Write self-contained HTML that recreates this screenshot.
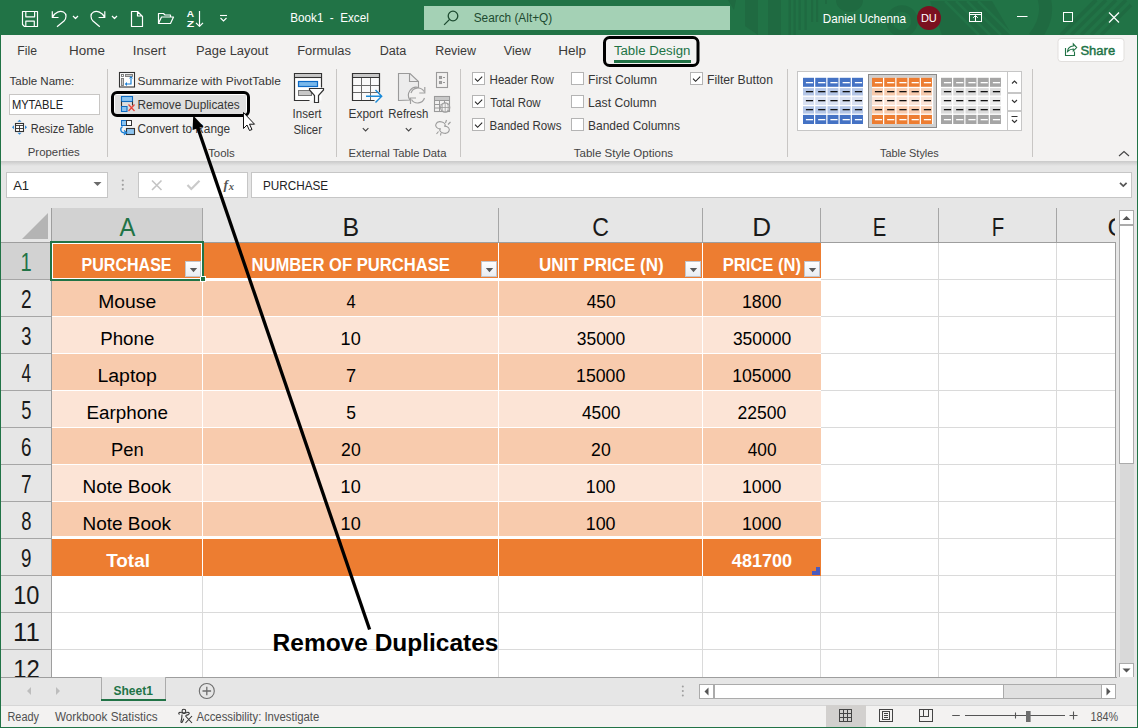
<!DOCTYPE html><html><head><meta charset="utf-8"><style>
*{margin:0;padding:0}html,body{width:1138px;height:728px;overflow:hidden;background:#f3f2f1}
svg{position:absolute;left:0;top:0;display:block}
text{font-family:"Liberation Sans",sans-serif;white-space:pre}
</style></head><body>
<svg width="1138" height="728" viewBox="0 0 1138 728">
<rect x="0" y="0" width="1138" height="35" fill="#217346" />
<g fill="#1f6a41"><polygon points="728,0 736,0 734,10"/><polygon points="745,0 758,0 758,35 745,26"/><rect x="768" y="0" width="13" height="35"/><rect x="788.5" y="0" width="2.5" height="35"/><rect x="793.5" y="0" width="2.2" height="35"/><rect x="798.5" y="0" width="2.2" height="30"/><rect x="804.5" y="0" width="2.2" height="30"/><rect x="811" y="0" width="2.2" height="22"/><rect x="816" y="0" width="2.2" height="22"/><rect x="825" y="0" width="2" height="4"/><path d="M836,0 A13.5,12 0 0 0 863,0 Z"/></g>
<circle cx="902" cy="21" r="12.5" fill="none" stroke="#1f6a41" stroke-width="6.5"/>
<polygon points="930,1 992,1 1012,35 942,35" fill="#1f6a41"/>
<g stroke="#217346" stroke-width="2.6"><path d="M945,1 L979,35 M956,1 L990,35 M967,1 L1001,35 M978,1 L1012,35"/></g>
<path d="M1044,-2 C1048,12 1044,26 1034,38" fill="none" stroke="#1f6a41" stroke-width="13"/>
<g stroke="#1f6a41" stroke-width="3.5"><path d="M1061,35 L1096,0"/><path d="M1061,35 L1096,0 M1071,35 L1106,0 M1081,35 L1116,0 M1091,35 L1126,0 M1101,35 L1131,5"/></g>
<g fill="none" stroke="#fff" stroke-width="1.2" stroke-linejoin="round">
<path d="M22.5,11.5 h15 v15 h-13 l-2,-2 z M25.8,11.5 v5.3 h8.8 v-5.3 M25.8,26.5 v-5.3 h8.5 v5.3"/>
<path d="M52.3,11.2 v6.3 h6.2 M52.6,17.2 C55,12 60,10.5 63.5,12 C67,14 66.5,18.5 64,21 L57,26.8"/>
<path d="M73,16 l2.5,2.5 l2.5,-2.5"/>
<path d="M104.8,11.2 v6.3 h-6.2 M104.5,17.2 C102,12 97,10.5 93.5,12 C90,14 90.5,18.5 93,21 L99.8,26.8"/>
<path d="M112,16 l2.5,2.5 l2.5,-2.5"/>
<path d="M131.5,11.5 h6 l5,5 v10 h-11 z M137.5,11.5 v4.5 h5"/>
<path d="M158.5,23.5 v-10 h5 l1.5,1.5 h5.5 v2.5 M158.5,23.5 l3,-6.5 h12 l-3,6.5 z"/>
<path d="M199.5,11 v15 M196,22.8 l3.5,3.5 l3.5,-3.5"/>
</g>
<text x="186.76" y="17.4" font-size="8.43" fill="#fff" font-weight="bold" textLength="7.31" lengthAdjust="spacingAndGlyphs" >A</text>
<text x="186.66" y="26.9" font-size="8.43" fill="#fff" font-weight="bold" textLength="7.47" lengthAdjust="spacingAndGlyphs" >Z</text>
<g fill="none" stroke="#fff" stroke-width="1.1"><path d="M220,15.5 h7"/><path d="M220.5,18 l3,3 l3,-3"/></g>
<text x="290.34" y="22" font-size="13.08" fill="#fff" textLength="78.42" lengthAdjust="spacingAndGlyphs" >Book1  -  Excel</text>
<rect x="424" y="6" width="306" height="24" fill="#a4d1b5" />
<g fill="none" stroke="#1d4b30" stroke-width="1.3"><circle cx="453" cy="16" r="4.8"/><path d="M449.6,19.4 l-5.5,5.5"/></g>
<text x="473.68" y="22" font-size="13.08" fill="#1d4b30" textLength="78.54" lengthAdjust="spacingAndGlyphs" >Search (Alt+Q)</text>
<text x="822.84" y="22.8" font-size="12.79" fill="#fff" textLength="83.13" lengthAdjust="spacingAndGlyphs" >Daniel Uchenna</text>
<circle cx="929" cy="18" r="12" fill="#7b1020"/>
<text x="920.89" y="21.6" font-size="11.05" fill="#fff" textLength="15.95" lengthAdjust="spacingAndGlyphs" >DU</text>
<g fill="none" stroke="#fff" stroke-width="1"><rect x="969.5" y="12.5" width="12" height="9"/><path d="M969.5,14.5 h12 M975.5,21 v-5.5 M973.2,17.8 l2.3,-2.3 l2.3,2.3"/><path d="M1017,16.5 h10.5"/><rect x="1063.5" y="12.5" width="9" height="9"/></g>
<g fill="none" stroke="#fff" stroke-width="1.2"><path d="M1109,12.5 l10,10 M1119,12.5 l-10,10"/></g>
<rect x="0" y="35" width="1138" height="126" fill="#f3f2f1" />
<text x="17.30" y="55" font-size="13.08" fill="#3b3a39" textLength="19.63" lengthAdjust="spacingAndGlyphs" >File</text>
<text x="69.10" y="55" font-size="13.08" fill="#3b3a39" textLength="35.89" lengthAdjust="spacingAndGlyphs" >Home</text>
<text x="132.78" y="55" font-size="13.08" fill="#3b3a39" textLength="33.08" lengthAdjust="spacingAndGlyphs" >Insert</text>
<text x="195.94" y="55" font-size="13.08" fill="#3b3a39" textLength="72.43" lengthAdjust="spacingAndGlyphs" >Page Layout</text>
<text x="297.24" y="55" font-size="13.08" fill="#3b3a39" textLength="53.71" lengthAdjust="spacingAndGlyphs" >Formulas</text>
<text x="379.66" y="55" font-size="13.08" fill="#3b3a39" textLength="26.72" lengthAdjust="spacingAndGlyphs" >Data</text>
<text x="435.18" y="55" font-size="13.08" fill="#3b3a39" textLength="40.78" lengthAdjust="spacingAndGlyphs" >Review</text>
<text x="503.65" y="55" font-size="13.08" fill="#3b3a39" textLength="27.29" lengthAdjust="spacingAndGlyphs" >View</text>
<text x="558.18" y="55" font-size="13.08" fill="#3b3a39" textLength="27.97" lengthAdjust="spacingAndGlyphs" >Help</text>
<text x="613.91" y="55" font-size="13.08" fill="#217346" textLength="76.43" lengthAdjust="spacingAndGlyphs" >Table Design</text>
<rect x="614" y="60" width="77" height="3" fill="#217346" />
<rect x="604.5" y="37.5" width="93.5" height="28" rx="5" fill="none" stroke="#000" stroke-width="3"/>
<rect x="1058" y="38.5" width="66" height="23" rx="3" fill="#fff" stroke="#e1dfdd" stroke-width="1"/>
<g fill="none" stroke="#217346" stroke-width="1.1"><path d="M1065.5,48 v7.5 h9 v-4"/><path d="M1067.5,51.5 c0.3,-3.2 2.5,-5.2 5.8,-5.5 v-2 l3.4,3.6 l-3.4,3.4 v-2 c-2.2,0 -4,0.8 -5.8,2.5 z"/></g>
<text x="1080.43" y="54.9" font-size="13.08" fill="#217346" textLength="34.75" lengthAdjust="spacingAndGlyphs" stroke="#217346" stroke-width="0.45">Share</text>
<path d="M107.5,69 V157" stroke="#c8c6c4" stroke-width="1"/>
<path d="M336.5,69 V157" stroke="#c8c6c4" stroke-width="1"/>
<path d="M460.5,69 V157" stroke="#c8c6c4" stroke-width="1"/>
<path d="M787.5,69 V157" stroke="#c8c6c4" stroke-width="1"/>
<path d="M1032.5,69 V157" stroke="#c8c6c4" stroke-width="1"/>
<text x="9.55" y="84.6" font-size="11.63" fill="#363636" textLength="64.79" lengthAdjust="spacingAndGlyphs" >Table Name:</text>
<rect x="9.5" y="94.5" width="90" height="20" fill="#fff" stroke="#c8c6c4"/>
<text x="11.88" y="108.7" font-size="11.92" fill="#222" textLength="51.28" lengthAdjust="spacingAndGlyphs" >MYTABLE</text>
<rect x="15.5" y="123.5" width="8" height="8" fill="#fff" stroke="#333" stroke-width="1.1"/>
<path d="M15.5,125.5 h8 M15.5,128.5 h8 M19.5,125.5 v6" fill="none" stroke="#333" stroke-width="0.9"/>
<g fill="#2b88d8"><path d="M12,127.3 l2,-2 v4z M27,127.3 l-2,-2 v4z M19.5,119.8 l-2,2 h4z M19.5,134.8 l-2,-2 h4z"/></g>
<text x="30.80" y="132.5" font-size="11.92" fill="#363636" textLength="62.70" lengthAdjust="spacingAndGlyphs" >Resize Table</text>
<text x="27.77" y="156.4" font-size="10.76" fill="#444" textLength="51.94" lengthAdjust="spacingAndGlyphs" >Properties</text>
<rect x="119.5" y="72.5" width="15" height="14.5" fill="#fff" stroke="#333" stroke-width="1.1"/>
<rect x="121.5" y="74.5" width="2" height="2" fill="#fff" stroke="#777" stroke-width="0.9"/>
<rect x="125.5" y="74.5" width="7" height="2" fill="#c8c8c8" stroke="#777" stroke-width="0.9"/>
<rect x="121.5" y="78.5" width="2" height="7" fill="#c8c8c8" stroke="#777" stroke-width="0.9"/>
<g fill="none" stroke="#1a7fd4" stroke-width="1.2"><path d="M131,79 v5 h-4.5"/></g>
<path d="M129,78.5 l2,-2.5 l2,2.5z M127,82 l-2.3,2 l2.3,2z" fill="#1a7fd4"/>
<text x="137.47" y="84.8" font-size="11.63" fill="#363636" textLength="143.36" lengthAdjust="spacingAndGlyphs" >Summarize with PivotTable</text>
<rect x="114.5" y="94.5" width="132" height="20" fill="#dedede" stroke="#fff" stroke-width="1"/>
<rect x="121.5" y="96.5" width="11" height="5" fill="#8cc4f0" stroke="#0f6cc2" stroke-width="1.1"/>
<path d="M121.5,101.5 v4.5 M132.5,101.5 v4" stroke="#333" stroke-width="1.1" fill="none"/>
<path d="M121.5,106.5 h5.5 v5 h-5.5z" fill="#8cc4f0" stroke="#0f6cc2" stroke-width="1.1"/>
<path d="M128.5,104.5 l6,6.5 M134.5,104.5 l-6,6.5" stroke="#e8473e" stroke-width="1.3"/>
<text x="137.43" y="108.8" font-size="12.21" fill="#363636" textLength="102.20" lengthAdjust="spacingAndGlyphs" >Remove Duplicates</text>
<rect x="112.5" y="92.5" width="136" height="23" rx="4.5" fill="none" stroke="#000" stroke-width="3"/>
<rect x="121.5" y="120.5" width="5" height="5" fill="#8cc4f0" stroke="#0f6cc2" stroke-width="1"/>
<rect x="126.5" y="120.5" width="5" height="5" fill="#fff" stroke="#333" stroke-width="1"/>
<rect x="126.5" y="128.5" width="8" height="6" fill="#8cc4f0" stroke="#333" stroke-width="1.1"/>
<g fill="none" stroke="#1a7fd4" stroke-width="1.3"><path d="M122.5,126.5 c-3,2 -2,6 2,6.5 h2"/><path d="M124,130.5 l2.5,2 l-2.5,2.2"/></g>
<text x="137.41" y="132.6" font-size="11.92" fill="#363636" textLength="92.81" lengthAdjust="spacingAndGlyphs" >Convert to Range</text>
<text x="208.15" y="156.9" font-size="10.76" fill="#444" textLength="26.67" lengthAdjust="spacingAndGlyphs" >Tools</text>
<path d="M243.5,112.5 v16 l3.5,-3.5 l2.5,5.5 l2.5,-1 l-2.5,-5.3 h5 z" fill="#fff" stroke="#111" stroke-width="1"/>
<rect x="294.5" y="73.5" width="27" height="27" fill="#fff"/><path d="M309.5,100.5 h-15 v-27 h27 v14" fill="none" stroke="#333" stroke-width="1.2"/>
<rect x="295" y="74" width="26" height="3.5" fill="#c8c8c8" />
<path d="M294.5,77.5 h27" stroke="#333" stroke-width="1.1"/>
<rect x="298.5" y="81.5" width="19" height="5" fill="#7ab8ea" stroke="#0d6ac6" stroke-width="1.2"/>
<rect x="298.5" y="90.5" width="13" height="5" fill="#c8c8c8" stroke="#777" stroke-width="1"/>
<path d="M309.5,88.5 h14 v1.5 l-5,5.5 v7 h-4 v-7 l-5,-5.5 z" fill="#fff" stroke="#333" stroke-width="1.2"/>
<text x="292.54" y="118" font-size="11.92" fill="#363636" textLength="28.92" lengthAdjust="spacingAndGlyphs" >Insert</text>
<text x="293.50" y="133.7" font-size="11.92" fill="#363636" textLength="28.47" lengthAdjust="spacingAndGlyphs" >Slicer</text>
<rect x="352.5" y="73.5" width="27" height="27" fill="#fafafa"/>
<rect x="353" y="74" width="26" height="3.5" fill="#c8c8c8" />
<g fill="none" stroke="#6a6a6a" stroke-width="1"><path d="M361.5,77.5 v23 M370.5,77.5 v23 M352.5,85.5 h27 M352.5,92.5 h27"/></g>
<g fill="none" stroke="#333" stroke-width="1.2"><path d="M379.5,92 v-18.5 h-27 v27 h22 M352.5,77.5 h27"/></g>
<g fill="none" stroke="#1a8ad8" stroke-width="1.4"><path d="M366,96.2 h15.5 M375.5,90 l6.2,6.2 l-6.2,6.2"/></g>
<text x="348.52" y="118" font-size="12.50" fill="#363636" textLength="34.45" lengthAdjust="spacingAndGlyphs" >Export</text>
<path d="M362.8,128.2 l2.8,2.8 l2.8,-2.8" fill="none" stroke="#444" stroke-width="1.1"/>
<path d="M398.5,100.5 v-27 h11.5 l8.5,8 v6 a8,8 0 0 0 -8.5,12.5 z" fill="#ececec" stroke="#9a9a9a" stroke-width="1.1"/>
<path d="M409.5,73.5 v8 h9" fill="none" stroke="#9a9a9a" stroke-width="1.1"/>
<g fill="none" stroke="#a0a0a0" stroke-width="1.2"><path d="M411,93 a7.2,7.2 0 0 1 13,-1.5"/><path d="M424.5,98 a7.2,7.2 0 0 1 -13,1.5"/></g>
<path d="M424.8,87 v6 h-5.5 M410.5,104 v-6 h5.5" fill="none" stroke="#a0a0a0" stroke-width="1.2"/>
<text x="388.37" y="118" font-size="12.50" fill="#363636" textLength="39.86" lengthAdjust="spacingAndGlyphs" >Refresh</text>
<path d="M405.8,128.2 l2.8,2.8 l2.8,-2.8" fill="none" stroke="#444" stroke-width="1.1"/>
<g fill="none" stroke="#9a9a9a" stroke-width="1.1"><rect x="436.5" y="72.5" width="11" height="15"/><rect x="439.5" y="76.5" width="2" height="2"/><rect x="439.5" y="81.5" width="2" height="2"/><path d="M443,77.5 h2 M443,82.5 h2"/></g>
<rect x="434.5" y="96.5" width="15" height="15" fill="none" stroke="#9a9a9a" stroke-width="1.1"/>
<rect x="435" y="97" width="14" height="3" fill="#c8c8c8" />
<g fill="none" stroke="#9a9a9a" stroke-width="1"><path d="M434.5,100.5 h15 M439.5,100.5 v11 M444.5,100.5 v3 M434.5,104.5 h6 M434.5,108 h6"/></g>
<circle cx="445.2" cy="107.5" r="4.6" fill="#f3f2f1" stroke="#9a9a9a" stroke-width="1.1"/>
<path d="M440.6,107.5 h9.2 M445.2,102.9 v9.2 M443.2,103.5 c-1.5,2.5 -1.5,5.5 0,8 M447.2,103.5 c1.5,2.5 1.5,5.5 0,8" fill="none" stroke="#9a9a9a" stroke-width="0.8"/>
<g fill="none" stroke="#9a9a9a" stroke-width="1.1"><path d="M441,129 c-4.5,0 -6,-3 -5,-5 c1,-2.5 4,-2.5 6,-2 c2,0.5 4,2 3,4.5"/><path d="M444,126 c4.5,0 6,3 5,5 c-1,2.5 -4,2.5 -6,2 c-2,-0.5 -4,-2 -3,-4.5"/><path d="M445.5,123 l1,-3 M448,124.5 l2.5,-2.5 M438.5,131.5 l-2,2.5 M441,133 l-0.5,2.5"/></g>
<text x="348.58" y="156.8" font-size="10.76" fill="#444" textLength="97.91" lengthAdjust="spacingAndGlyphs" >External Table Data</text>
<rect x="472.5" y="72.5" width="12" height="12" fill="#fff" stroke="#b4b4b4" stroke-width="1"/>
<path d="M475.0,78.7 l2.6,2.6 l4.6,-4.6" fill="none" stroke="#222" stroke-width="1.1"/>
<text x="489.55" y="84.4" font-size="11.92" fill="#363636" textLength="64.40" lengthAdjust="spacingAndGlyphs" >Header Row</text>
<rect x="472.5" y="95.5" width="12" height="12" fill="#fff" stroke="#b4b4b4" stroke-width="1"/>
<path d="M475.0,101.7 l2.6,2.6 l4.6,-4.6" fill="none" stroke="#222" stroke-width="1.1"/>
<text x="490.25" y="107.4" font-size="11.92" fill="#363636" textLength="50.41" lengthAdjust="spacingAndGlyphs" >Total Row</text>
<rect x="472.5" y="118.5" width="12" height="12" fill="#fff" stroke="#b4b4b4" stroke-width="1"/>
<path d="M475.0,124.7 l2.6,2.6 l4.6,-4.6" fill="none" stroke="#222" stroke-width="1.1"/>
<text x="489.55" y="130.4" font-size="11.92" fill="#363636" textLength="71.86" lengthAdjust="spacingAndGlyphs" >Banded Rows</text>
<rect x="571.5" y="72.5" width="12" height="12" fill="#fff" stroke="#b4b4b4" stroke-width="1"/>
<text x="588.00" y="84.4" font-size="11.92" fill="#363636" textLength="69.07" lengthAdjust="spacingAndGlyphs" >First Column</text>
<rect x="571.5" y="95.5" width="12" height="12" fill="#fff" stroke="#b4b4b4" stroke-width="1"/>
<text x="588.00" y="107.4" font-size="11.92" fill="#363636" textLength="68.48" lengthAdjust="spacingAndGlyphs" >Last Column</text>
<rect x="571.5" y="118.5" width="12" height="12" fill="#fff" stroke="#b4b4b4" stroke-width="1"/>
<text x="588.02" y="130.4" font-size="11.92" fill="#363636" textLength="92.01" lengthAdjust="spacingAndGlyphs" >Banded Columns</text>
<rect x="690.5" y="72.5" width="12" height="12" fill="#fff" stroke="#b4b4b4" stroke-width="1"/>
<path d="M693.0,78.7 l2.6,2.6 l4.6,-4.6" fill="none" stroke="#222" stroke-width="1.1"/>
<text x="707.00" y="84.4" font-size="11.92" fill="#363636" textLength="65.98" lengthAdjust="spacingAndGlyphs" >Filter Button</text>
<text x="573.75" y="156.5" font-size="10.76" fill="#444" textLength="99.37" lengthAdjust="spacingAndGlyphs" >Table Style Options</text>
<rect x="797.5" y="71.5" width="210" height="59" fill="#fff" stroke="#c6c6c6"/>
<rect x="868.5" y="74.5" width="68" height="53" fill="#d0d0d0" stroke="#8a8a8a"/>
<rect x="803" y="77.8" width="61.2" height="46.2" fill="#fff" />
<rect x="803.00" y="77.80" width="11.0" height="9.0" fill="#4472c4" />
<rect x="805.90" y="82" width="7.2" height="1.3" fill="#fff"/>
<rect x="815.24" y="77.80" width="11.0" height="9.0" fill="#4472c4" />
<rect x="818.14" y="82" width="7.2" height="1.3" fill="#fff"/>
<rect x="827.48" y="77.80" width="11.0" height="9.0" fill="#4472c4" />
<rect x="830.38" y="82" width="7.2" height="1.3" fill="#fff"/>
<rect x="839.72" y="77.80" width="11.0" height="9.0" fill="#4472c4" />
<rect x="842.62" y="82" width="7.2" height="1.3" fill="#fff"/>
<rect x="851.96" y="77.80" width="11.0" height="9.0" fill="#4472c4" />
<rect x="854.86" y="82" width="7.2" height="1.3" fill="#fff"/>
<rect x="803.00" y="88.10" width="11.0" height="7.4" fill="#b4c6e7" />
<rect x="805.90" y="91" width="7.2" height="1.3" fill="#111"/>
<rect x="815.24" y="88.10" width="11.0" height="7.4" fill="#b4c6e7" />
<rect x="818.14" y="91" width="7.2" height="1.3" fill="#111"/>
<rect x="827.48" y="88.10" width="11.0" height="7.4" fill="#b4c6e7" />
<rect x="830.38" y="91" width="7.2" height="1.3" fill="#111"/>
<rect x="839.72" y="88.10" width="11.0" height="7.4" fill="#b4c6e7" />
<rect x="842.62" y="91" width="7.2" height="1.3" fill="#111"/>
<rect x="851.96" y="88.10" width="11.0" height="7.4" fill="#b4c6e7" />
<rect x="854.86" y="91" width="7.2" height="1.3" fill="#111"/>
<rect x="803.00" y="96.80" width="11.0" height="8.2" fill="#d9e1f2" />
<rect x="805.90" y="100" width="7.2" height="1.3" fill="#111"/>
<rect x="815.24" y="96.80" width="11.0" height="8.2" fill="#d9e1f2" />
<rect x="818.14" y="100" width="7.2" height="1.3" fill="#111"/>
<rect x="827.48" y="96.80" width="11.0" height="8.2" fill="#d9e1f2" />
<rect x="830.38" y="100" width="7.2" height="1.3" fill="#111"/>
<rect x="839.72" y="96.80" width="11.0" height="8.2" fill="#d9e1f2" />
<rect x="842.62" y="100" width="7.2" height="1.3" fill="#111"/>
<rect x="851.96" y="96.80" width="11.0" height="8.2" fill="#d9e1f2" />
<rect x="854.86" y="100" width="7.2" height="1.3" fill="#111"/>
<rect x="803.00" y="106.20" width="11.0" height="7.4" fill="#b4c6e7" />
<rect x="805.90" y="109" width="7.2" height="1.3" fill="#111"/>
<rect x="815.24" y="106.20" width="11.0" height="7.4" fill="#b4c6e7" />
<rect x="818.14" y="109" width="7.2" height="1.3" fill="#111"/>
<rect x="827.48" y="106.20" width="11.0" height="7.4" fill="#b4c6e7" />
<rect x="830.38" y="109" width="7.2" height="1.3" fill="#111"/>
<rect x="839.72" y="106.20" width="11.0" height="7.4" fill="#b4c6e7" />
<rect x="842.62" y="109" width="7.2" height="1.3" fill="#111"/>
<rect x="851.96" y="106.20" width="11.0" height="7.4" fill="#b4c6e7" />
<rect x="854.86" y="109" width="7.2" height="1.3" fill="#111"/>
<rect x="803.00" y="114.90" width="11.0" height="9.1" fill="#4472c4" />
<rect x="805.90" y="119" width="7.2" height="1.3" fill="#fff"/>
<rect x="815.24" y="114.90" width="11.0" height="9.1" fill="#4472c4" />
<rect x="818.14" y="119" width="7.2" height="1.3" fill="#fff"/>
<rect x="827.48" y="114.90" width="11.0" height="9.1" fill="#4472c4" />
<rect x="830.38" y="119" width="7.2" height="1.3" fill="#fff"/>
<rect x="839.72" y="114.90" width="11.0" height="9.1" fill="#4472c4" />
<rect x="842.62" y="119" width="7.2" height="1.3" fill="#fff"/>
<rect x="851.96" y="114.90" width="11.0" height="9.1" fill="#4472c4" />
<rect x="854.86" y="119" width="7.2" height="1.3" fill="#fff"/>
<rect x="872" y="77.8" width="61.2" height="46.2" fill="#fff" />
<rect x="872.00" y="77.80" width="11.0" height="9.0" fill="#ed7d31" />
<rect x="874.90" y="82" width="7.2" height="1.3" fill="#fff"/>
<rect x="884.24" y="77.80" width="11.0" height="9.0" fill="#ed7d31" />
<rect x="887.14" y="82" width="7.2" height="1.3" fill="#fff"/>
<rect x="896.48" y="77.80" width="11.0" height="9.0" fill="#ed7d31" />
<rect x="899.38" y="82" width="7.2" height="1.3" fill="#fff"/>
<rect x="908.72" y="77.80" width="11.0" height="9.0" fill="#ed7d31" />
<rect x="911.62" y="82" width="7.2" height="1.3" fill="#fff"/>
<rect x="920.96" y="77.80" width="11.0" height="9.0" fill="#ed7d31" />
<rect x="923.86" y="82" width="7.2" height="1.3" fill="#fff"/>
<rect x="872.00" y="88.10" width="11.0" height="7.4" fill="#f8cbad" />
<rect x="874.90" y="91" width="7.2" height="1.3" fill="#111"/>
<rect x="884.24" y="88.10" width="11.0" height="7.4" fill="#f8cbad" />
<rect x="887.14" y="91" width="7.2" height="1.3" fill="#111"/>
<rect x="896.48" y="88.10" width="11.0" height="7.4" fill="#f8cbad" />
<rect x="899.38" y="91" width="7.2" height="1.3" fill="#111"/>
<rect x="908.72" y="88.10" width="11.0" height="7.4" fill="#f8cbad" />
<rect x="911.62" y="91" width="7.2" height="1.3" fill="#111"/>
<rect x="920.96" y="88.10" width="11.0" height="7.4" fill="#f8cbad" />
<rect x="923.86" y="91" width="7.2" height="1.3" fill="#111"/>
<rect x="872.00" y="96.80" width="11.0" height="8.2" fill="#fce4d6" />
<rect x="874.90" y="100" width="7.2" height="1.3" fill="#111"/>
<rect x="884.24" y="96.80" width="11.0" height="8.2" fill="#fce4d6" />
<rect x="887.14" y="100" width="7.2" height="1.3" fill="#111"/>
<rect x="896.48" y="96.80" width="11.0" height="8.2" fill="#fce4d6" />
<rect x="899.38" y="100" width="7.2" height="1.3" fill="#111"/>
<rect x="908.72" y="96.80" width="11.0" height="8.2" fill="#fce4d6" />
<rect x="911.62" y="100" width="7.2" height="1.3" fill="#111"/>
<rect x="920.96" y="96.80" width="11.0" height="8.2" fill="#fce4d6" />
<rect x="923.86" y="100" width="7.2" height="1.3" fill="#111"/>
<rect x="872.00" y="106.20" width="11.0" height="7.4" fill="#f8cbad" />
<rect x="874.90" y="109" width="7.2" height="1.3" fill="#111"/>
<rect x="884.24" y="106.20" width="11.0" height="7.4" fill="#f8cbad" />
<rect x="887.14" y="109" width="7.2" height="1.3" fill="#111"/>
<rect x="896.48" y="106.20" width="11.0" height="7.4" fill="#f8cbad" />
<rect x="899.38" y="109" width="7.2" height="1.3" fill="#111"/>
<rect x="908.72" y="106.20" width="11.0" height="7.4" fill="#f8cbad" />
<rect x="911.62" y="109" width="7.2" height="1.3" fill="#111"/>
<rect x="920.96" y="106.20" width="11.0" height="7.4" fill="#f8cbad" />
<rect x="923.86" y="109" width="7.2" height="1.3" fill="#111"/>
<rect x="872.00" y="114.90" width="11.0" height="9.1" fill="#ed7d31" />
<rect x="874.90" y="119" width="7.2" height="1.3" fill="#fff"/>
<rect x="884.24" y="114.90" width="11.0" height="9.1" fill="#ed7d31" />
<rect x="887.14" y="119" width="7.2" height="1.3" fill="#fff"/>
<rect x="896.48" y="114.90" width="11.0" height="9.1" fill="#ed7d31" />
<rect x="899.38" y="119" width="7.2" height="1.3" fill="#fff"/>
<rect x="908.72" y="114.90" width="11.0" height="9.1" fill="#ed7d31" />
<rect x="911.62" y="119" width="7.2" height="1.3" fill="#fff"/>
<rect x="920.96" y="114.90" width="11.0" height="9.1" fill="#ed7d31" />
<rect x="923.86" y="119" width="7.2" height="1.3" fill="#fff"/>
<rect x="941" y="77.8" width="61.2" height="46.2" fill="#fff" />
<rect x="941.00" y="77.80" width="11.0" height="9.0" fill="#a5a5a5" />
<rect x="943.90" y="82" width="7.2" height="1.3" fill="#fff"/>
<rect x="953.24" y="77.80" width="11.0" height="9.0" fill="#a5a5a5" />
<rect x="956.14" y="82" width="7.2" height="1.3" fill="#fff"/>
<rect x="965.48" y="77.80" width="11.0" height="9.0" fill="#a5a5a5" />
<rect x="968.38" y="82" width="7.2" height="1.3" fill="#fff"/>
<rect x="977.72" y="77.80" width="11.0" height="9.0" fill="#a5a5a5" />
<rect x="980.62" y="82" width="7.2" height="1.3" fill="#fff"/>
<rect x="989.96" y="77.80" width="11.0" height="9.0" fill="#a5a5a5" />
<rect x="992.86" y="82" width="7.2" height="1.3" fill="#fff"/>
<rect x="941.00" y="88.10" width="11.0" height="7.4" fill="#dbdbdb" />
<rect x="943.90" y="91" width="7.2" height="1.3" fill="#111"/>
<rect x="953.24" y="88.10" width="11.0" height="7.4" fill="#dbdbdb" />
<rect x="956.14" y="91" width="7.2" height="1.3" fill="#111"/>
<rect x="965.48" y="88.10" width="11.0" height="7.4" fill="#dbdbdb" />
<rect x="968.38" y="91" width="7.2" height="1.3" fill="#111"/>
<rect x="977.72" y="88.10" width="11.0" height="7.4" fill="#dbdbdb" />
<rect x="980.62" y="91" width="7.2" height="1.3" fill="#111"/>
<rect x="989.96" y="88.10" width="11.0" height="7.4" fill="#dbdbdb" />
<rect x="992.86" y="91" width="7.2" height="1.3" fill="#111"/>
<rect x="941.00" y="96.80" width="11.0" height="8.2" fill="#ededed" />
<rect x="943.90" y="100" width="7.2" height="1.3" fill="#111"/>
<rect x="953.24" y="96.80" width="11.0" height="8.2" fill="#ededed" />
<rect x="956.14" y="100" width="7.2" height="1.3" fill="#111"/>
<rect x="965.48" y="96.80" width="11.0" height="8.2" fill="#ededed" />
<rect x="968.38" y="100" width="7.2" height="1.3" fill="#111"/>
<rect x="977.72" y="96.80" width="11.0" height="8.2" fill="#ededed" />
<rect x="980.62" y="100" width="7.2" height="1.3" fill="#111"/>
<rect x="989.96" y="96.80" width="11.0" height="8.2" fill="#ededed" />
<rect x="992.86" y="100" width="7.2" height="1.3" fill="#111"/>
<rect x="941.00" y="106.20" width="11.0" height="7.4" fill="#dbdbdb" />
<rect x="943.90" y="109" width="7.2" height="1.3" fill="#111"/>
<rect x="953.24" y="106.20" width="11.0" height="7.4" fill="#dbdbdb" />
<rect x="956.14" y="109" width="7.2" height="1.3" fill="#111"/>
<rect x="965.48" y="106.20" width="11.0" height="7.4" fill="#dbdbdb" />
<rect x="968.38" y="109" width="7.2" height="1.3" fill="#111"/>
<rect x="977.72" y="106.20" width="11.0" height="7.4" fill="#dbdbdb" />
<rect x="980.62" y="109" width="7.2" height="1.3" fill="#111"/>
<rect x="989.96" y="106.20" width="11.0" height="7.4" fill="#dbdbdb" />
<rect x="992.86" y="109" width="7.2" height="1.3" fill="#111"/>
<rect x="941.00" y="114.90" width="11.0" height="9.1" fill="#a5a5a5" />
<rect x="943.90" y="119" width="7.2" height="1.3" fill="#fff"/>
<rect x="953.24" y="114.90" width="11.0" height="9.1" fill="#a5a5a5" />
<rect x="956.14" y="119" width="7.2" height="1.3" fill="#fff"/>
<rect x="965.48" y="114.90" width="11.0" height="9.1" fill="#a5a5a5" />
<rect x="968.38" y="119" width="7.2" height="1.3" fill="#fff"/>
<rect x="977.72" y="114.90" width="11.0" height="9.1" fill="#a5a5a5" />
<rect x="980.62" y="119" width="7.2" height="1.3" fill="#fff"/>
<rect x="989.96" y="114.90" width="11.0" height="9.1" fill="#a5a5a5" />
<rect x="992.86" y="119" width="7.2" height="1.3" fill="#fff"/>
<rect x="1007.5" y="71.5" width="14" height="21.0" fill="#fff" stroke="#c6c6c6"/>
<rect x="1007.5" y="93.5" width="14" height="17.0" fill="#fff" stroke="#c6c6c6"/>
<rect x="1007.5" y="111.5" width="14" height="19.0" fill="#fff" stroke="#c6c6c6"/>
<g fill="none" stroke="#333" stroke-width="1.1"><path d="M1012,83.5 l2.5,-2.5 l2.5,2.5"/><path d="M1012,100 l2.5,2.5 l2.5,-2.5"/><path d="M1011.5,116.5 h6 M1012,120 l2.5,2.5 l2.5,-2.5"/></g>
<text x="880.06" y="156.8" font-size="10.76" fill="#444" textLength="58.73" lengthAdjust="spacingAndGlyphs" >Table Styles</text>
<path d="M1119,156 l5,-4.5 l5,4.5" fill="none" stroke="#444" stroke-width="1.1"/>
<rect x="0" y="161" width="1138" height="47" fill="#e6e6e6" />
<defs><linearGradient id="fb" x1="0" y1="0" x2="0" y2="1"><stop offset="0" stop-color="#ffffff"/><stop offset="1" stop-color="#e8ecf2"/></linearGradient><linearGradient id="sh" x1="0" y1="0" x2="0" y2="1"><stop offset="0" stop-color="#c9c9c9"/><stop offset="1" stop-color="#e6e6e6"/></linearGradient></defs>
<rect x="0" y="161" width="1138" height="5" fill="url(#sh)" />
<rect x="6.5" y="172.5" width="101" height="25" fill="#fff" stroke="#c6c6c6"/>
<text x="13.17" y="190" font-size="12.94" fill="#222" textLength="15.94" lengthAdjust="spacingAndGlyphs" >A1</text>
<path d="M93.5,182 h8 l-4,4z" fill="#6a6a6a"/>
<g fill="#a0a0a0"><circle cx="122.8" cy="180.5" r="1.1"/><circle cx="122.8" cy="184.8" r="1.1"/><circle cx="122.8" cy="189.1" r="1.1"/></g>
<rect x="138.5" y="172.5" width="109" height="25" fill="#fff" stroke="#c6c6c6"/>
<g fill="none" stroke="#c4c4c4" stroke-width="1.6"><path d="M152,180.5 l9.5,9.5 M161.5,180.5 l-9.5,9.5"/></g><path d="M187.5,185 l3.8,4 l8.2,-8.2" fill="none" stroke="#cacaca" stroke-width="2.2"/>
<text x="223.5" y="189" font-size="13.5" font-style="italic" font-weight="bold" fill="#555" style="font-family:'Liberation Serif'">f</text><text x="228.8" y="189.8" font-size="10.5" font-style="italic" font-weight="bold" fill="#555" style="font-family:'Liberation Serif'">x</text>
<rect x="251.5" y="172.5" width="880" height="25" fill="#fff" stroke="#c6c6c6"/>
<text x="263.04" y="189.9" font-size="13.23" fill="#222" textLength="65.14" lengthAdjust="spacingAndGlyphs" >PURCHASE</text>
<path d="M1120,182.8 l3.3,3.3 l3.3,-3.3" fill="none" stroke="#555" stroke-width="1.7"/>
<rect x="0" y="208" width="1117" height="470" fill="#fff" />
<rect x="1" y="208" width="1115" height="34" fill="#e6e6e6" />
<rect x="52" y="208" width="150" height="34" fill="#d2d2d2" />
<rect x="1" y="243" width="50" height="435" fill="#e6e6e6" />
<rect x="1" y="243" width="50" height="36" fill="#d2d2d2" />
<polygon points="48,213 48,239 22,239" fill="#b4b4b4"/>
<g shape-rendering="crispEdges">
<rect x="202" y="243" width="1" height="435" fill="#dadada"/>
<rect x="498" y="243" width="1" height="435" fill="#dadada"/>
<rect x="702" y="243" width="1" height="435" fill="#dadada"/>
<rect x="820" y="243" width="1" height="435" fill="#dadada"/>
<rect x="938" y="243" width="1" height="435" fill="#dadada"/>
<rect x="1056" y="243" width="1" height="435" fill="#dadada"/>
<rect x="52" y="279" width="1063" height="1" fill="#dadada"/>
<rect x="52" y="316" width="1063" height="1" fill="#dadada"/>
<rect x="52" y="353" width="1063" height="1" fill="#dadada"/>
<rect x="52" y="390" width="1063" height="1" fill="#dadada"/>
<rect x="52" y="427" width="1063" height="1" fill="#dadada"/>
<rect x="52" y="464" width="1063" height="1" fill="#dadada"/>
<rect x="52" y="501" width="1063" height="1" fill="#dadada"/>
<rect x="52" y="538" width="1063" height="1" fill="#dadada"/>
<rect x="52" y="575" width="1063" height="1" fill="#dadada"/>
<rect x="52" y="612" width="1063" height="1" fill="#dadada"/>
<rect x="52" y="649" width="1063" height="1" fill="#dadada"/>
<rect x="202" y="208" width="1" height="34" fill="#a6a6a6"/>
<rect x="498" y="208" width="1" height="34" fill="#a6a6a6"/>
<rect x="702" y="208" width="1" height="34" fill="#a6a6a6"/>
<rect x="820" y="208" width="1" height="34" fill="#a6a6a6"/>
<rect x="938" y="208" width="1" height="34" fill="#a6a6a6"/>
<rect x="1056" y="208" width="1" height="34" fill="#a6a6a6"/>
<rect x="1" y="242" width="1115" height="1" fill="#9e9e9e" />
<rect x="51" y="208" width="1" height="470" fill="#9e9e9e" />
<rect x="1" y="279" width="50" height="1" fill="#a6a6a6" />
<rect x="1" y="316" width="50" height="1" fill="#a6a6a6" />
<rect x="1" y="353" width="50" height="1" fill="#a6a6a6" />
<rect x="1" y="390" width="50" height="1" fill="#a6a6a6" />
<rect x="1" y="427" width="50" height="1" fill="#a6a6a6" />
<rect x="1" y="464" width="50" height="1" fill="#a6a6a6" />
<rect x="1" y="501" width="50" height="1" fill="#a6a6a6" />
<rect x="1" y="538" width="50" height="1" fill="#a6a6a6" />
<rect x="1" y="575" width="50" height="1" fill="#a6a6a6" />
<rect x="1" y="612" width="50" height="1" fill="#a6a6a6" />
<rect x="1" y="649" width="50" height="1" fill="#a6a6a6" />
<rect x="1115" y="242" width="1" height="436" fill="#9e9e9e" />
</g>
<g shape-rendering="crispEdges">
<rect x="52" y="243" width="769" height="35" fill="#ed7d31" />
<rect x="52" y="278" width="769" height="3" fill="#fff" />
<rect x="52" y="281" width="769" height="35" fill="#f8cbad" />
<rect x="52" y="316" width="769" height="1" fill="#fff" />
<rect x="52" y="317" width="769" height="36" fill="#fce4d6" />
<rect x="52" y="353" width="769" height="1" fill="#fff" />
<rect x="52" y="354" width="769" height="36" fill="#f8cbad" />
<rect x="52" y="390" width="769" height="1" fill="#fff" />
<rect x="52" y="391" width="769" height="36" fill="#fce4d6" />
<rect x="52" y="427" width="769" height="1" fill="#fff" />
<rect x="52" y="428" width="769" height="36" fill="#f8cbad" />
<rect x="52" y="464" width="769" height="1" fill="#fff" />
<rect x="52" y="465" width="769" height="36" fill="#fce4d6" />
<rect x="52" y="501" width="769" height="1" fill="#fff" />
<rect x="52" y="502" width="769" height="36" fill="#f8cbad" />
<rect x="52" y="538" width="769" height="1" fill="#fff" />
<rect x="52" y="536" width="769" height="3" fill="#fff" />
<rect x="52" y="539" width="769" height="37" fill="#ed7d31" />
<rect x="202" y="243" width="1" height="333" fill="#fff" />
<rect x="498" y="243" width="1" height="333" fill="#fff" />
<rect x="702" y="243" width="1" height="333" fill="#fff" />
</g>
<g shape-rendering="crispEdges">
<rect x="50" y="241" width="154" height="2" fill="#217346" />
<rect x="50" y="279" width="151" height="2" fill="#217346" />
<rect x="50" y="241" width="2" height="40" fill="#217346" />
<rect x="202" y="241" width="2" height="36" fill="#217346" />
<rect x="52" y="243" width="150" height="1" fill="#fff" />
<rect x="52" y="278" width="148" height="1" fill="#fff" />
<rect x="52" y="243" width="1" height="35" fill="#fff" />
<rect x="201" y="243" width="1" height="34" fill="#fff" />
<rect x="200" y="276" width="6" height="6" fill="#fff" />
<rect x="201" y="277" width="4" height="4" fill="#217346" />
</g>
<text x="119.45" y="235.6" font-size="25.58" fill="#217346" textLength="15.87" lengthAdjust="spacingAndGlyphs" >A</text>
<text x="342.46" y="235.6" font-size="25.58" fill="#1a1a1a" textLength="16.61" lengthAdjust="spacingAndGlyphs" >B</text>
<text x="592.14" y="235.6" font-size="25.58" fill="#1a1a1a" textLength="16.74" lengthAdjust="spacingAndGlyphs" >C</text>
<text x="752.36" y="235.6" font-size="25.58" fill="#1a1a1a" textLength="18.84" lengthAdjust="spacingAndGlyphs" >D</text>
<text x="872.74" y="235.6" font-size="25.58" fill="#1a1a1a" textLength="13.49" lengthAdjust="spacingAndGlyphs" >E</text>
<text x="991.63" y="235.6" font-size="25.58" fill="#1a1a1a" textLength="12.47" lengthAdjust="spacingAndGlyphs" >F</text>
<svg x="1100" y="208" width="15" height="33" overflow="hidden">
<text x="7.5" y="27.6" font-size="25.58" fill="#1a1a1a" font-family="Liberation Sans">G</text>
</svg>
<text x="20.42" y="270.6" font-size="26.45" fill="#217346" textLength="11.20" lengthAdjust="spacingAndGlyphs" >1</text>
<text x="21.00" y="308.4" font-size="26.45" fill="#1a1a1a" textLength="10.61" lengthAdjust="spacingAndGlyphs" >2</text>
<text x="21.26" y="345.4" font-size="26.45" fill="#1a1a1a" textLength="10.17" lengthAdjust="spacingAndGlyphs" >3</text>
<text x="21.57" y="382.4" font-size="26.45" fill="#1a1a1a" textLength="9.56" lengthAdjust="spacingAndGlyphs" >4</text>
<text x="21.22" y="419.4" font-size="26.45" fill="#1a1a1a" textLength="10.17" lengthAdjust="spacingAndGlyphs" >5</text>
<text x="21.01" y="456.4" font-size="26.45" fill="#1a1a1a" textLength="10.43" lengthAdjust="spacingAndGlyphs" >6</text>
<text x="21.00" y="493.4" font-size="26.45" fill="#1a1a1a" textLength="10.61" lengthAdjust="spacingAndGlyphs" >7</text>
<text x="21.18" y="530.4" font-size="26.45" fill="#1a1a1a" textLength="10.25" lengthAdjust="spacingAndGlyphs" >8</text>
<text x="21.09" y="567.4" font-size="26.45" fill="#1a1a1a" textLength="10.43" lengthAdjust="spacingAndGlyphs" >9</text>
<text x="13.20" y="604.4" font-size="26.45" fill="#1a1a1a" textLength="26.30" lengthAdjust="spacingAndGlyphs" >10</text>
<text x="13.04" y="641.4" font-size="26.45" fill="#1a1a1a" textLength="26.80" lengthAdjust="spacingAndGlyphs" >11</text>
<svg x="1" y="649" width="50" height="28" overflow="hidden">
<text x="12.18" y="29.4" font-size="26.45" fill="#1a1a1a" textLength="26.62" lengthAdjust="spacingAndGlyphs" font-family="Liberation Sans">12</text>
</svg>
<text x="81.54" y="270.7" font-size="18.02" fill="#fff" font-weight="bold" textLength="90.00" lengthAdjust="spacingAndGlyphs" >PURCHASE</text>
<text x="251.50" y="270.7" font-size="18.02" fill="#fff" font-weight="bold" textLength="198.34" lengthAdjust="spacingAndGlyphs" >NUMBER OF PURCHASE</text>
<text x="538.88" y="270.7" font-size="18.02" fill="#fff" font-weight="bold" textLength="124.86" lengthAdjust="spacingAndGlyphs" >UNIT PRICE (N)</text>
<text x="722.81" y="270.7" font-size="18.02" fill="#fff" font-weight="bold" textLength="78.19" lengthAdjust="spacingAndGlyphs" >PRICE (N)</text>
<rect x="185.5" y="261.5" width="15" height="15" fill="url(#fb)" stroke="#c2c6cc"/>
<path d="M189.8,268 h7.4 l-3.7,4.2z" fill="#5a5a5a"/>
<rect x="481.5" y="261.5" width="15" height="15" fill="url(#fb)" stroke="#c2c6cc"/>
<path d="M485.8,268 h7.4 l-3.7,4.2z" fill="#5a5a5a"/>
<rect x="685.5" y="261.5" width="15" height="15" fill="url(#fb)" stroke="#c2c6cc"/>
<path d="M689.8,268 h7.4 l-3.7,4.2z" fill="#5a5a5a"/>
<rect x="804.5" y="261.5" width="15" height="15" fill="url(#fb)" stroke="#c2c6cc"/>
<path d="M808.8,268 h7.4 l-3.7,4.2z" fill="#5a5a5a"/>
<text x="98.21" y="307.8" font-size="17.88" fill="#000" textLength="58.03" lengthAdjust="spacingAndGlyphs" >Mouse</text>
<text x="346.48" y="307.8" font-size="17.88" fill="#000" textLength="9.14" lengthAdjust="spacingAndGlyphs" >4</text>
<text x="586.74" y="307.8" font-size="17.88" fill="#000" textLength="28.80" lengthAdjust="spacingAndGlyphs" >450</text>
<text x="741.91" y="307.8" font-size="17.88" fill="#000" textLength="39.52" lengthAdjust="spacingAndGlyphs" >1800</text>
<text x="100.16" y="344.8" font-size="17.88" fill="#000" textLength="54.15" lengthAdjust="spacingAndGlyphs" >Phone</text>
<text x="340.61" y="344.8" font-size="17.88" fill="#000" textLength="20.11" lengthAdjust="spacingAndGlyphs" >10</text>
<text x="576.74" y="344.8" font-size="17.88" fill="#000" textLength="48.54" lengthAdjust="spacingAndGlyphs" >35000</text>
<text x="732.88" y="344.8" font-size="17.88" fill="#000" textLength="58.26" lengthAdjust="spacingAndGlyphs" >350000</text>
<text x="97.46" y="381.8" font-size="17.88" fill="#000" textLength="59.48" lengthAdjust="spacingAndGlyphs" >Laptop</text>
<text x="345.93" y="381.8" font-size="17.88" fill="#000" textLength="10.15" lengthAdjust="spacingAndGlyphs" >7</text>
<text x="576.05" y="381.8" font-size="17.88" fill="#000" textLength="49.23" lengthAdjust="spacingAndGlyphs" >15000</text>
<text x="732.20" y="381.8" font-size="17.88" fill="#000" textLength="58.95" lengthAdjust="spacingAndGlyphs" >105000</text>
<text x="86.46" y="418.8" font-size="17.88" fill="#000" textLength="81.59" lengthAdjust="spacingAndGlyphs" >Earphone</text>
<text x="346.14" y="418.8" font-size="17.88" fill="#000" textLength="9.72" lengthAdjust="spacingAndGlyphs" >5</text>
<text x="581.88" y="418.8" font-size="17.88" fill="#000" textLength="38.53" lengthAdjust="spacingAndGlyphs" >4500</text>
<text x="737.52" y="418.8" font-size="17.88" fill="#000" textLength="48.76" lengthAdjust="spacingAndGlyphs" >22500</text>
<text x="111.09" y="455.8" font-size="17.88" fill="#000" textLength="32.67" lengthAdjust="spacingAndGlyphs" >Pen</text>
<text x="341.10" y="455.8" font-size="17.88" fill="#000" textLength="19.60" lengthAdjust="spacingAndGlyphs" >20</text>
<text x="591.10" y="455.8" font-size="17.88" fill="#000" textLength="19.60" lengthAdjust="spacingAndGlyphs" >20</text>
<text x="747.74" y="455.8" font-size="17.88" fill="#000" textLength="28.80" lengthAdjust="spacingAndGlyphs" >400</text>
<text x="82.49" y="492.8" font-size="17.88" fill="#000" textLength="88.61" lengthAdjust="spacingAndGlyphs" >Note Book</text>
<text x="340.61" y="492.8" font-size="17.88" fill="#000" textLength="20.11" lengthAdjust="spacingAndGlyphs" >10</text>
<text x="585.76" y="492.8" font-size="17.88" fill="#000" textLength="29.80" lengthAdjust="spacingAndGlyphs" >100</text>
<text x="741.91" y="492.8" font-size="17.88" fill="#000" textLength="39.52" lengthAdjust="spacingAndGlyphs" >1000</text>
<text x="82.49" y="529.8" font-size="17.88" fill="#000" textLength="88.61" lengthAdjust="spacingAndGlyphs" >Note Book</text>
<text x="340.61" y="529.8" font-size="17.88" fill="#000" textLength="20.11" lengthAdjust="spacingAndGlyphs" >10</text>
<text x="585.76" y="529.8" font-size="17.88" fill="#000" textLength="29.80" lengthAdjust="spacingAndGlyphs" >100</text>
<text x="741.91" y="529.8" font-size="17.88" fill="#000" textLength="39.52" lengthAdjust="spacingAndGlyphs" >1000</text>
<text x="106.21" y="566.8" font-size="18.02" fill="#fff" font-weight="bold" textLength="43.72" lengthAdjust="spacingAndGlyphs" >Total</text>
<text x="731.85" y="566.8" font-size="18.02" fill="#fff" font-weight="bold" textLength="60.29" lengthAdjust="spacingAndGlyphs" >481700</text>
<path d="M812,571 h4 v-4 h4 v8 h-8z" fill="#4a5bbf"/>
<rect x="1116" y="208" width="21" height="470" fill="#e6e6e6" />
<rect x="1120" y="211" width="14" height="466" fill="#d9d9d9" />
<rect x="1119.5" y="210.5" width="14" height="14" fill="#fff" stroke="#ababab"/>
<rect x="1119.5" y="225.5" width="14" height="238" fill="#fff" stroke="#ababab"/>
<rect x="1119.5" y="663.5" width="14" height="14" fill="#fff" stroke="#ababab"/>
<path d="M1122.5,220 h8 l-4,-4z M1122.5,668.5 h8 l-4,4z" fill="#555"/>
<path d="M196.5,124 L369.6,629.5" stroke="#000" stroke-width="3.3" fill="none"/>
<polygon points="193.2,115.5 192.6,130 203.5,126.5" fill="#000"/>
<text x="272.58" y="651.4" font-size="24.13" fill="#000" font-weight="bold" textLength="225.89" lengthAdjust="spacingAndGlyphs" >Remove Duplicates</text>
<rect x="1" y="677" width="1136" height="28" fill="#e6e6e6" />
<rect x="1" y="677" width="1116" height="1" fill="#9e9e9e" />
<path d="M27,691 l4,-4 v8z M56,687 l4,4 l-4,4z" fill="#bdbdbd"/>
<path d="M101.5,700 V677.5 H165.5 V700" fill="#e6e6e6" stroke="#ababab"/>
<rect x="102" y="677" width="63" height="1" fill="#e6e6e6" />
<rect x="101" y="699" width="65" height="2" fill="#217346" />
<text x="113.46" y="694.7" font-size="13.37" fill="#217346" font-weight="bold" textLength="39.44" lengthAdjust="spacingAndGlyphs" >Sheet1</text>
<circle cx="206.8" cy="691" r="7.5" fill="none" stroke="#6e6e6e" stroke-width="1.1"/><path d="M202.5,691 h8.6 M206.8,686.7 v8.6" stroke="#6e6e6e" stroke-width="1.3"/>
<g fill="#9e9e9e"><circle cx="682.8" cy="686.5" r="1"/><circle cx="682.8" cy="691" r="1"/><circle cx="682.8" cy="695.5" r="1"/></g>
<rect x="699.5" y="684.5" width="416" height="14" fill="#e0e0e0" stroke="#ababab"/>
<rect x="699.5" y="684.5" width="14" height="14" fill="#fff" stroke="#ababab"/>
<rect x="714.5" y="684.5" width="289" height="14" fill="#fff" stroke="#ababab"/>
<rect x="1101.5" y="684.5" width="14" height="14" fill="#fff" stroke="#ababab"/>
<path d="M704.5,691.5 l4,-4 v8z M1110.5,691.5 l-4,-4 v8z" fill="#555"/>
<rect x="1" y="705" width="1136" height="22" fill="#f3f2f1" />
<rect x="1" y="705" width="1136" height="1" fill="#d6d6d6" />
<text x="7.51" y="720.7" font-size="12.50" fill="#505050" textLength="31.52" lengthAdjust="spacingAndGlyphs" >Ready</text>
<text x="54.95" y="720.7" font-size="12.50" fill="#505050" textLength="102.67" lengthAdjust="spacingAndGlyphs" >Workbook Statistics</text>
<g fill="none" stroke="#333" stroke-width="1.1"><circle cx="183.9" cy="711.2" r="1.9"/><path d="M179.5,714.5 c-1.5,-1 -0.5,-2.8 1.5,-2 l3,1 l3,-1 c2,-0.8 3,1 1.5,2 c-0.8,0.5 -2,0.7 -3,1 M182,714.5 c0,3 -0.5,5.5 -1,7 c-0.3,1 1,1.3 1.5,0.3 l1.2,-3"/><path d="M185.5,716 l6.5,7 M192,716 l-6.5,7"/></g>
<text x="196.48" y="720.7" font-size="12.50" fill="#505050" textLength="122.72" lengthAdjust="spacingAndGlyphs" >Accessibility: Investigate</text>
<rect x="826" y="705" width="40" height="22" fill="#d2d0ce" />
<g fill="none" stroke="#444" stroke-width="1.1" shape-rendering="crispEdges"><rect x="839.5" y="709.5" width="12" height="12"/><path d="M843.5,709.5 v12 M847.5,709.5 v12 M839.5,713.5 h12 M839.5,717.5 h12"/><rect x="879.5" y="709.5" width="13" height="12"/><path d="M882.5,711.5 h7 v8 h-7z M884,713.5 h4 M884,715.5 h4 M884,717.5 h4"/><rect x="919.5" y="709.5" width="13" height="12"/><path d="M919.5,716.5 h9 v-7 M923.5,709.5 v7"/></g>
<g stroke="#555" stroke-width="1.1"><path d="M952.2,715.5 h7.6 M965,715.5 h100 M1015.5,712.5 v6 M1069.5,715.5 h8 M1073.5,711.5 v8"/></g>
<rect x="1026" y="711" width="4.6" height="11" fill="#6e6e6e" />
<text x="1090.48" y="720.7" font-size="12.50" fill="#505050" textLength="27.71" lengthAdjust="spacingAndGlyphs" >184%</text>
<rect x="0" y="35" width="1" height="693" fill="#217346" />
<rect x="1137" y="35" width="1" height="693" fill="#217346" />
<rect x="0" y="727" width="1138" height="1" fill="#217346" />
</svg></body></html>
